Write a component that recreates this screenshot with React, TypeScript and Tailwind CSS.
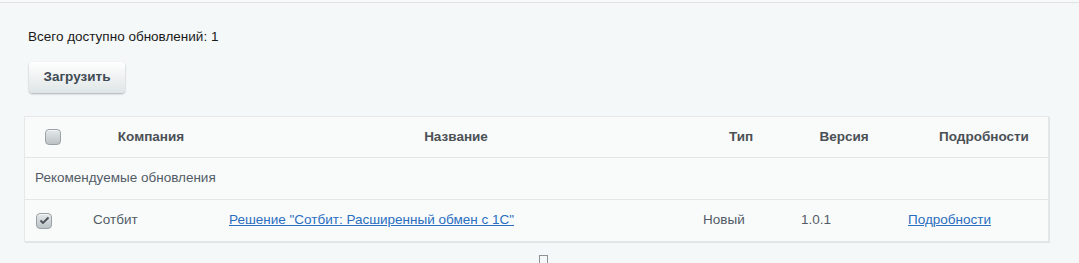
const font = { fontFamily: '"Liberation Sans", Arial, sans-serif' }

const Box = ({ checked }: { checked?: boolean }) => (
  <div className="w-[16px] h-[16px] rounded-[4px] border border-[#9aa1a5] bg-gradient-to-b from-[#e4e8ea] to-[#bcc3c6] shadow-[inset_0_1px_0_rgba(255,255,255,0.6)] flex items-center justify-center">
    {checked && (
      <svg width="11" height="9" viewBox="0 0 11 9">
        <path d="M1.5 4.5 L4 7 L9.5 1.5" fill="none" stroke="#4a5055" strokeWidth="1.8" />
      </svg>
    )}
  </div>
)

export default function App() {
  const cols = "grid grid-cols-[56px_140px_470px_100px_106px_153px]"
  return (
    <div style={font} className="w-[1079px] h-[263px] overflow-hidden bg-[#f4f8f8] text-[13.5px]">
      <div className="h-[2px] bg-[#f8fafa]" />
      <div className="border-t border-[#dfe3e3] pl-[24px] pr-[30px]">
        <div className="pt-[24px] pl-[4px] text-[#1a1a1a] leading-[20px]">Всего доступно обновлений: 1</div>
        <div className="pt-[15px] pl-[5px]">
          <button className="w-[96px] h-[31px] rounded-[4px] bg-gradient-to-b from-[#ffffff] to-[#dfe5e6] shadow-[0_1px_2px_rgba(0,0,0,0.3)] font-bold text-[#414b53] text-[13.5px]">
            Загрузить
          </button>
        </div>
        <div className="mt-[23px] w-[1025px] bg-[#f9fbfb] border border-[#e4e8e8] shadow-[1px_1px_0_#e0e4e5]">
          <div className={`${cols} h-[41px] items-center font-bold text-[#4b5055] border-b border-[#e1e6e6]`}>
            <div className="flex justify-center"><Box /></div>
            <div className="text-center">Компания</div>
            <div className="text-center">Название</div>
            <div className="text-center">Тип</div>
            <div className="text-center">Версия</div>
            <div className="text-center pl-[21px]">Подробности</div>
          </div>
          <div className="h-[42px] flex items-center pl-[10px] text-[#535c66] border-b border-[#e1e6e6]">
            Рекомендуемые обновления
          </div>
          <div className={`${cols} h-[41px] items-center text-[#535c66]`}>
            <div className="pl-[11px]"><Box checked /></div>
            <div className="pl-[12px]">Сотбит</div>
            <div className="pl-[8px]">
              <a href="#" className="text-[#2a6ebf] underline">Решение "Сотбит: Расширенный обмен с 1С"</a>
            </div>
            <div className="pl-[12px]">Новый</div>
            <div className="pl-[10px]">1.0.1</div>
            <div className="pl-[11px]">
              <a href="#" className="text-[#2a6ebf] underline">Подробности</a>
            </div>
          </div>
        </div>
        <div className="mt-[13px] ml-[515px] w-[9px] h-[10px] border border-[#8c9498] bg-[#f4f8f8]" />
      </div>
    </div>
  )
}
